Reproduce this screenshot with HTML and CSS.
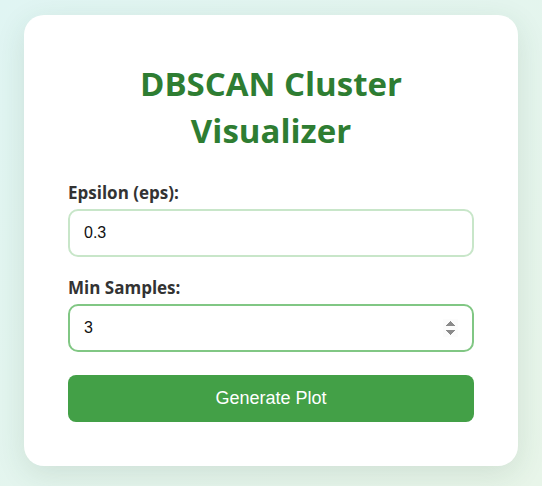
FILE: index.html
```html
<!DOCTYPE html>
<html lang="en">
<head>
<meta charset="utf-8">
<title>DBSCAN Cluster Visualizer</title>
<link rel="stylesheet" href="styles.css">
</head>
<body>
<main class="card">
  <h1 class="title">DBSCAN Cluster Visualizer</h1>
  <form class="form">
    <div class="field">
      <label class="label" for="eps">Epsilon (eps):</label>
      <input class="input" id="eps" type="number" step="0.1" value="0.3">
    </div>
    <div class="field">
      <label class="label" for="min">Min Samples:</label>
      <input class="input input-active" id="min" type="number" value="3">
    </div>
    <button class="button" type="button">Generate Plot</button>
  </form>
</main>
</body>
</html>
```
FILE: styles.css
```css
* { box-sizing: border-box; }
html, body { height: 100%; }
body {
  margin: 0;
  background: linear-gradient(135deg, #e0f5f3 0%, #e8f5e9 100%);
  font-family: "Open Sans", "Noto Sans", sans-serif;
  padding: 15px 24px 0 24px;
}
.card {
  width: 494px;
  background: #fff;
  border-radius: 20px;
  box-shadow: 0 8px 30px rgba(40, 80, 50, 0.12);
  padding: 45px 44px 44px;
}
.title {
  margin: 0 0 28px;
  text-align: center;
  color: #2e7d32;
  font-size: 33px;
  line-height: 47px;
  font-weight: 700;
}
.form { display: flex; flex-direction: column; }
.field { display: flex; flex-direction: column; gap: 5px; margin-bottom: 20px; }
.label {
  color: #333;
  font-weight: 700;
  font-size: 17px;
  line-height: 22px;
}
.input {
  width: 100%;
  height: 48px;
  border: 2px solid #c8e6c9;
  border-radius: 10px;
  padding: 0 14px;
  font-family: "Liberation Sans", Arial, sans-serif;
  font-size: 16px;
  color: #111;
  background: #fff;
  outline: none;
  -moz-appearance: textfield;
}
.input::-webkit-inner-spin-button { opacity: 0; }
.input-active { border-color: #81c784; }
.input-active::-webkit-inner-spin-button { opacity: 1; }
.button {
  margin-top: 3px;
  height: 47px;
  border: none;
  border-radius: 8px;
  background: #43a047;
  color: #fff;
  font-family: "Liberation Sans", Arial, sans-serif;
  font-size: 18px;
}
```
